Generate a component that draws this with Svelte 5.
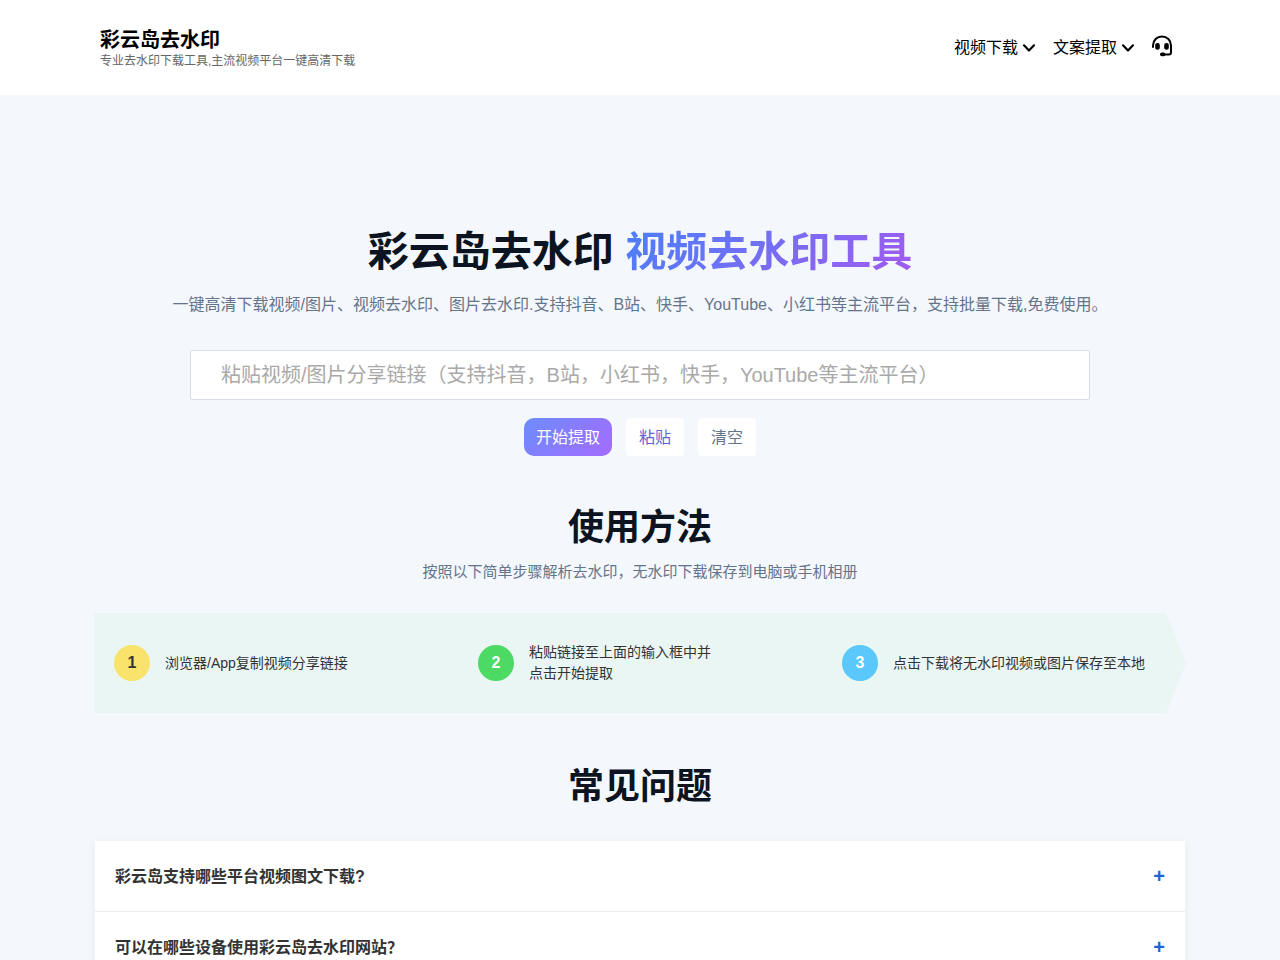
<script>
  const menus = ['视频下载', '文案提取'];

  const steps = [
    { tone: 'yellow', lines: ['浏览器/App复制视频分享链接'] },
    { tone: 'green', lines: ['粘贴链接至上面的输入框中并', '点击开始提取'] },
    { tone: 'blue', lines: ['点击下载将无水印视频或图片保存至本地'] }
  ];

  const questions = [
    {
      q: '彩云岛支持哪些平台视频图文下载?',
      a: '支持抖音、B站、快手、YouTube、小红书等主流平台。'
    },
    {
      q: '可以在哪些设备使用彩云岛去水印网站？',
      a: '电脑或手机浏览器均可使用。'
    }
  ];

  let link = $state('');
  let opened = $state(-1);

  async function paste() {
    link = await navigator.clipboard.readText();
  }
</script>

<header class="site-header">
  <div class="bar">
    <a class="brand" href="#top">
      <span class="name">彩云岛去水印</span>
      <span class="tagline">专业去水印下载工具,主流视频平台一键高清下载</span>
    </a>
    <nav class="menu">
      {#each menus as label}
        <button class="menu-item" type="button" aria-haspopup="true">
          {label}
          <svg width="14" height="14" viewBox="0 0 14 14" aria-hidden="true">
            <path d="M2 4.3 7 9.5 12 4.3" fill="none" stroke="currentColor" stroke-width="2.2" stroke-linecap="round" stroke-linejoin="round" />
          </svg>
        </button>
      {/each}
      <a class="support" href="#support" aria-label="客服">
        <svg width="22" height="22" viewBox="0 0 22 22" aria-hidden="true">
          <path d="M2 12V10.4a9 9 0 0 1 18 0v6.8a2.2 2.2 0 0 1-2.2 2.2H12" fill="none" stroke="currentColor" stroke-width="2" stroke-linecap="round" />
          <rect x="4.2" y="8" width="4.6" height="6.8" rx="2.1" fill="currentColor" />
          <rect x="13.2" y="8" width="4.6" height="6.8" rx="2.1" fill="currentColor" />
          <rect x="9" y="17.4" width="5.4" height="3.8" rx="1.9" fill="currentColor" />
        </svg>
      </a>
    </nav>
  </div>
</header>

<main id="top">
  <section class="hero">
    <h1>彩云岛去水印 <span class="accent">视频去水印工具</span></h1>
    <p class="lead">一键高清下载视频/图片、视频去水印、图片去水印.支持抖音、B站、快手、YouTube、小红书等主流平台，支持批量下载,免费使用。</p>
    <form class="extract" onsubmit={(e) => e.preventDefault()}>
      <input
        type="text"
        aria-label="视频/图片分享链接"
        placeholder="粘贴视频/图片分享链接（支持抖音，B站，小红书，快手，YouTube等主流平台）"
        bind:value={link}
      />
      <div class="actions">
        <button class="btn primary" type="submit">开始提取</button>
        <button class="btn paste" type="button" onclick={paste}>粘贴</button>
        <button class="btn clear" type="button" onclick={() => (link = '')}>清空</button>
      </div>
    </form>
  </section>

  <section class="usage">
    <h2>使用方法</h2>
    <p class="note">按照以下简单步骤解析去水印，无水印下载保存到电脑或手机相册</p>
    <ol class="steps">
      {#each steps as step, i}
        <li>
          <span class="num {step.tone}">{i + 1}</span>
          <span class="text">
            {#each step.lines as line}<span class="line">{line}</span>{/each}
          </span>
        </li>
      {/each}
    </ol>
  </section>

  <section class="faq">
    <h2>常见问题</h2>
    <div class="list">
      {#each questions as item, i}
        <div class="entry">
          <button
            class="question"
            type="button"
            aria-expanded={opened === i}
            onclick={() => (opened = opened === i ? -1 : i)}
          >
            <span class="label">{item.q}</span>
            <span class="sign">{opened === i ? '-' : '+'}</span>
          </button>
          {#if opened === i}<p class="answer">{item.a}</p>{/if}
        </div>
      {/each}
    </div>
  </section>
</main>

<style>
  :global(body) {
    background: #f4f7fc;
    color: #333;
    font-family: 'Liberation Sans', 'Noto Sans CJK SC', sans-serif;
    overflow-x: hidden;
  }

  :global(html) {
    scrollbar-width: none;
  }

  button,
  input {
    font-family: inherit;
  }

  button {
    border: 0;
    cursor: pointer;
  }

  .site-header {
    background: #fff;
    padding: 0 100px;
  }

  .bar {
    display: flex;
    align-items: center;
    justify-content: space-between;
    max-width: 1080px;
    height: 95px;
    margin: 0 auto;
  }

  .brand {
    display: flex;
    flex-direction: column;
    padding-top: 2px;
    color: #000;
    text-decoration: none;
  }

  .name {
    font-size: 20px;
    font-weight: 700;
    line-height: 24px;
  }

  .tagline {
    color: #666;
    font-size: 12px;
    line-height: 18px;
  }

  .menu {
    display: flex;
    align-items: center;
    gap: 17px;
    padding-right: 7px;
  }

  .menu-item {
    display: flex;
    align-items: center;
    gap: 4px;
    padding: 0;
    background: none;
    color: #000;
    font-size: 16px;
    line-height: 24px;
  }

  .support {
    display: flex;
    padding-bottom: 4px;
    margin-left: -1px;
    color: #000;
  }

  main {
    max-width: 1092px;
    margin: 0 auto;
    padding: 0 20px;
  }

  h1,
  h2,
  p {
    margin: 0;
    text-align: center;
  }

  .hero {
    padding-top: 126px;
  }

  h1 {
    color: #0b1420;
    font-size: 41px;
    font-weight: 700;
    line-height: 62px;
  }

  .accent {
    background: linear-gradient(135deg, #4a80f8, #a25af0);
    background-clip: text;
    -webkit-background-clip: text;
    color: transparent;
  }

  .lead {
    padding-top: 10px;
    color: #64748b;
    font-size: 16px;
    line-height: 24px;
  }

  .extract {
    max-width: 900px;
    margin: 33px auto 0;
  }

  input {
    display: block;
    box-sizing: border-box;
    width: 100%;
    height: 50px;
    padding: 0 30px;
    border: 1px solid #d8dee6;
    border-radius: 2px;
    background: #fff;
    color: #333;
    font-size: 20px;
  }

  input::placeholder {
    color: #a9a9a9;
  }

  .actions {
    display: flex;
    justify-content: center;
    gap: 14px;
    padding-top: 18px;
  }

  .btn {
    height: 38px;
    padding: 0 13px 2px;
    border-radius: 4px;
    background: #fff;
    font-size: 16px;
  }

  .primary {
    padding: 0 12px 2px;
    border-radius: 10px;
    background: linear-gradient(135deg, #6c8cff, #a56bff);
    color: #fff;
  }

  .paste {
    color: #5b66cf;
  }

  .clear {
    color: #64748b;
  }

  .usage {
    padding-top: 45px;
  }

  h2 {
    color: #0b1420;
    font-size: 36px;
    font-weight: 700;
    line-height: 54px;
  }

  .note {
    padding-top: 5px;
    color: #64748b;
    font-size: 15px;
    line-height: 24px;
  }

  .steps {
    display: grid;
    grid-template-columns: repeat(3, 1fr);
    align-items: center;
    min-height: 100px;
    margin: 29px 0 0;
    padding: 0;
    background: #eaf6f4;
    clip-path: polygon(0 0, calc(100% - 20px) 0, 100% 50%, calc(100% - 20px) 100%, 0 100%);
    list-style: none;
  }

  .steps li {
    display: flex;
    align-items: center;
    gap: 15px;
    padding-left: 20px;
  }

  .num {
    flex: none;
    width: 36px;
    border-radius: 50%;
    color: #fff;
    font-size: 16px;
    font-weight: 700;
    line-height: 36px;
    text-align: center;
  }

  .yellow {
    background: #f9e36c;
    color: #333;
  }

  .green {
    background: #4cd964;
  }

  .blue {
    background: #5ac8fa;
  }

  .line {
    display: block;
    font-size: 14px;
    line-height: 21px;
  }

  .faq {
    padding-top: 47px;
  }

  .list {
    margin: 27px 1px 0;
    background: #fff;
    box-shadow: 0 2px 10px rgba(0, 0, 0, 0.06);
  }

  .entry {
    border-bottom: 1px solid #e8ebef;
  }

  .question {
    display: flex;
    align-items: center;
    justify-content: space-between;
    width: 100%;
    height: 70px;
    padding: 0 20px;
    background: none;
    color: #333;
    font-size: 16px;
    font-weight: 700;
    text-align: left;
  }

  .label {
    padding-bottom: 2px;
  }

  .sign {
    color: #1967d2;
    font-size: 20px;
  }

  .answer {
    padding: 0 20px 20px;
    font-size: 14px;
    line-height: 21px;
    text-align: left;
  }
</style>
